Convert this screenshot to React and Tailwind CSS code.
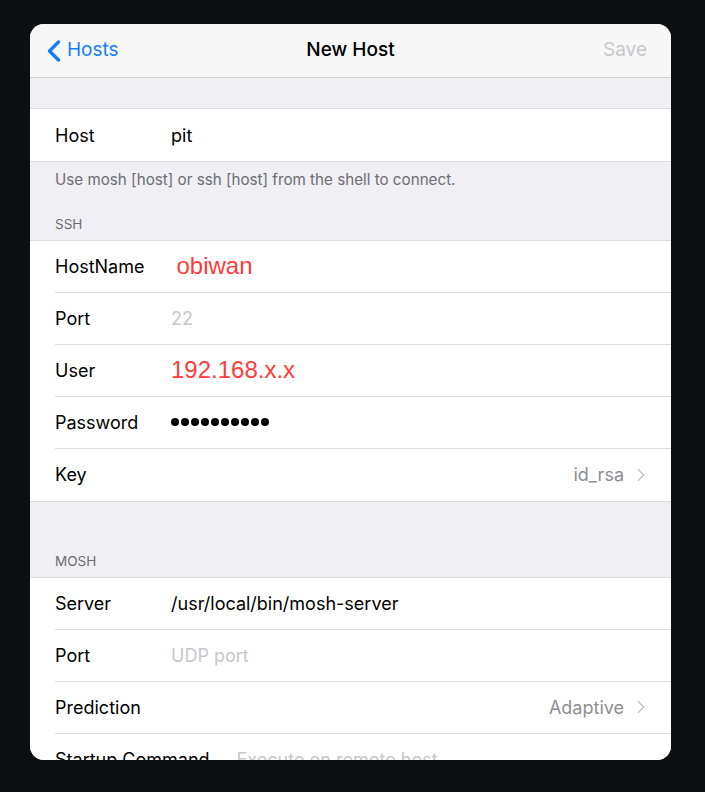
import { ChevronLeft, ChevronRight } from "lucide-react";

const font = { fontFamily: 'Inter, "Liberation Sans", Arial, sans-serif' };

const Row = ({ label, children, right }) => (
  <div className="ml-[25px] flex h-[52px] items-center border-b border-[#dcdce0] pr-[19px] last:border-b-0">
    <div className="min-w-[116px] pr-[27px] text-[18px] text-black">{label}</div>
    <div className="flex flex-1 items-center">{children}</div>
    {right && (
      <div className="flex items-center gap-[6px] text-[18px] text-[#8e8e93]">
        <span>{right}</span>
        <ChevronRight size={22} strokeWidth={1.5} className="text-[#c4c4c8]" />
      </div>
    )}
  </div>
);

const Header = ({ children, className }) => (
  <div className={"flex items-end px-[25px] pb-[6px] text-[13.5px] uppercase text-[#6d6d72] " + className}>
    {children}
  </div>
);

const Red = ({ children, className }) => (
  <span
    className={"text-[24px] text-[#ff3b3b] " + className}
    style={{ fontFamily: '"Liberation Sans", Arial, sans-serif' }}
  >
    {children}
  </span>
);

export default function App() {
  return (
    <div className="h-[792px] w-[705px] bg-[#0e0f13] pl-[30px] pt-[24px]" style={font}>
      <div className="h-[736px] w-[641px] overflow-hidden rounded-[14px] bg-[#efeff4]">
        <div className="relative flex h-[54px] items-center justify-between border-b border-[#cfcfd4] bg-[#f7f7f8] px-[12px]">
          <div className="flex items-center text-[19px] text-[#157efb]">
            <ChevronLeft size={36} strokeWidth={2.3} className="-ml-[6px]" />
            <span className="-ml-[5px]">Hosts</span>
          </div>
          <div className="absolute left-1/2 -translate-x-1/2 text-[19px] font-medium text-black">New Host</div>
          <div className="pr-[12px] text-[19px] text-[#c7c7cc]">Save</div>
        </div>

        <div className="h-[30px]" />

        <div className="border-y border-[#dcdce0] bg-white">
          <Row label="Host">
            <span className="text-[18px] text-black">pit</span>
          </Row>
        </div>

        <div className="px-[25px] pt-[7px] text-[15.2px] text-[#6d6d72]">
          Use mosh [host] or ssh [host] from the shell to connect.
        </div>

        <Header className="h-[48px]">SSH</Header>

        <div className="border-y border-[#dcdce0] bg-white">
          <Row label="HostName">
            <Red className="ml-[5px]">obiwan</Red>
          </Row>
          <Row label="Port">
            <span className="text-[18px] text-[#c7c7cc]">22</span>
          </Row>
          <Row label="User">
            <Red>192.168.x.x</Red>
          </Row>
          <Row label="Password">
            <div className="flex gap-[2px]">
              {Array.from({ length: 10 }).map((_, i) => (
                <span key={i} className="h-[8px] w-[8px] rounded-full bg-black" />
              ))}
            </div>
          </Row>
          <Row label="Key" right="id_rsa" />
        </div>

        <Header className="h-[75px]">MOSH</Header>

        <div className="border-t border-[#dcdce0] bg-white">
          <Row label="Server">
            <span className="text-[18px] text-black">/usr/local/bin/mosh-server</span>
          </Row>
          <Row label="Port">
            <span className="text-[18px] text-[#c7c7cc]">UDP port</span>
          </Row>
          <Row label="Prediction" right="Adaptive" />
          <Row label="Startup Command">
            <span className="text-[18px] text-[#c7c7cc]">Execute on remote host</span>
          </Row>
        </div>
      </div>
    </div>
  );
}
